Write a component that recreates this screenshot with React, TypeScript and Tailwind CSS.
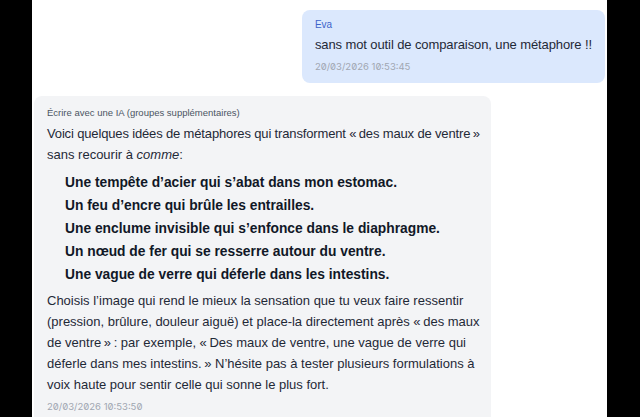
import React from 'react';

const n = '\u202F';

const ideas = [
  'Une tempête d’acier qui s’abat dans mon estomac.',
  'Un feu d’encre qui brûle les entrailles.',
  'Une enclume invisible qui s’enfonce dans le diaphragme.',
  'Un nœud de fer qui se resserre autour du ventre.',
  'Une vague de verre qui déferle dans les intestins.',
];

const advice = [
  'Choisis l’image qui rend le mieux la sensation que tu veux faire ressentir',
  `(pression, brûlure, douleur aiguë) et place-la directement après «${n}des maux`,
  `de ventre${n}»${n}: par exemple, «${n}Des maux de ventre, une vague de verre qui`,
  `déferle dans mes intestins.${n}» N’hésite pas à tester plusieurs formulations à`,
  'voix haute pour sentir celle qui sonne le plus fort.',
];

export default function App() {
  return (
    <div className="flex h-screen w-full overflow-hidden bg-black font-['Liberation_Sans','Noto_Sans',sans-serif]">
      <div className="w-[32px] shrink-0 bg-black" />
      <div className="flex flex-1 flex-col bg-white pt-[10px] px-[2px]">
        {/* user message */}
        <div className="flex justify-end">
          <div className="max-w-[80%] rounded-lg bg-[#dbe8fd] px-[13px] pt-[9px] pb-[9px]">
            <div className="text-[10px] leading-[12px] text-[#3d63c9]">Eva</div>
            <div className="mt-[4px] text-[13px] leading-[20px] tracking-[-0.1px] text-[#1f2937]">
              sans mot outil de comparaison, une métaphore !!
            </div>
            <div className="mt-[5px] font-['Inter'] text-[9.5px] leading-[14px] text-[#a0a6b1] [font-feature-settings:'zero']">
              20/03/2026 10:53:45
            </div>
          </div>
        </div>

        {/* assistant message */}
        <div className="mt-[13px] flex justify-start">
          <div className="w-[80%] rounded-lg bg-[#f3f4f6] px-[13px] pt-[11px] pb-[10px]">
            <div className="text-[9.5px] leading-[12px] text-[#4b5563]">
              Écrire avec une IA (groupes supplémentaires)
            </div>
            <p className="mt-[4px] whitespace-nowrap text-[13px] leading-[21px] text-[#1f2937]">
              <span className="tracking-[-0.15px]">
                Voici quelques idées de métaphores qui transforment «{n}des maux de ventre{n}»
              </span>
              <br />
              sans recourir à <em>comme</em>:
            </p>
            <ul className="mt-[6px] mb-[4px] pl-[18px]">
              {ideas.map(i => (
                <li key={i} className="text-[13.8px] font-bold leading-[23px] text-[#111827]">
                  {i}
                </li>
              ))}
            </ul>
            <p className="whitespace-nowrap text-[13px] leading-[21px] text-[#1f2937]">
              {advice.map((line, idx) => (
                <React.Fragment key={idx}>
                  {line}
                  {idx < advice.length - 1 && <br />}
                </React.Fragment>
              ))}
            </p>
            <div className="mt-[5px] font-['Inter'] text-[9.5px] leading-[14px] text-[#a0a6b1] [font-feature-settings:'zero']">
              20/03/2026 10:53:50
            </div>
          </div>
        </div>
      </div>
      <div className="w-[33px] shrink-0 bg-black" />
    </div>
  );
}
